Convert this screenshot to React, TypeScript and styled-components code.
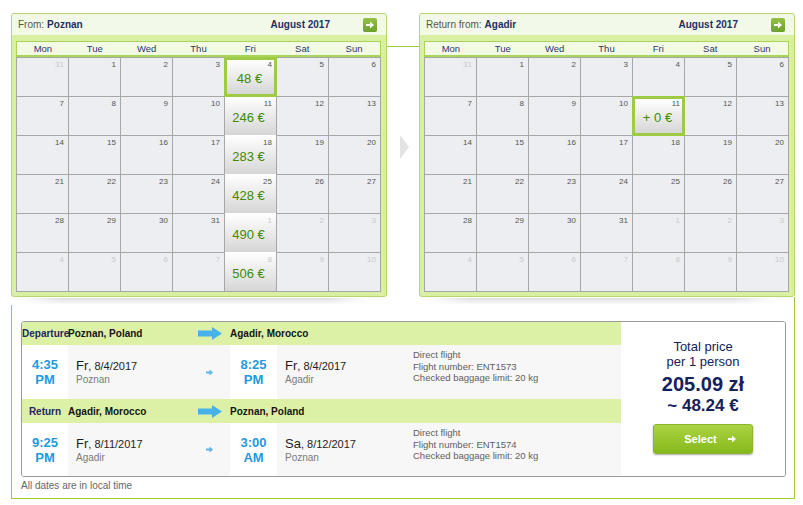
import React from 'react';
import styled, { createGlobalStyle, css } from 'styled-components';

const GlobalStyle = createGlobalStyle`
  html, body { margin: 0; padding: 0; background: #fff; }
  body { font-family: "Liberation Sans", Arial, sans-serif; }
`;

const Page = styled.div`
  width: 784px;
  padding: 13px 0 0 11px;
`;

/* ---------- calendars ---------- */

const CalendarRow = styled.div`
  display: flex;
`;

const CalendarColumn = styled.div`
  width: 376px;
  display: flex;
  flex-direction: column;
`;

const ShadowSlot = styled.div<{ $edge?: boolean }>`
  box-sizing: border-box;
  height: 8px;
  padding: 1px 20px 0 9px;
  ${(p) => p.$edge && css`border-right: 1px solid #9ccc3c;`}
`;

const Shadow = styled.div`
  height: 7px;
  background: linear-gradient(to bottom, rgba(0, 0, 0, 0.13), rgba(0, 0, 0, 0));
  -webkit-mask-image: linear-gradient(to right, transparent, #000 12%, #000 88%, transparent);
  mask-image: linear-gradient(to right, transparent, #000 12%, #000 88%, transparent);
`;

const Bridge = styled.div`
  width: 32px;
  display: flex;
  flex-direction: column;
`;

const BridgeLine = styled.div`
  height: 1px;
  margin-top: 33px;
  background: #9ccc3c;
`;

const BridgeTriangle = styled.div`
  width: 0;
  height: 0;
  margin: 88px 0 0 13px;
  border-left: 9px solid #e3e3e3;
  border-top: 12px solid transparent;
  border-bottom: 12px solid transparent;
`;

const Panel = styled.section`
  box-sizing: border-box;
  width: 376px;
  height: 284px;
  border: 1px solid #b3d76c;
  border-radius: 3px;
  background: #d9efa1;
  display: flex;
  flex-direction: column;
  overflow: hidden;
`;

const PanelHeader = styled.header`
  height: 21px;
  flex: none;
  background: #f3f9e8;
  display: flex;
  align-items: center;
  padding: 0 9px 0 6px;
  font-size: 10px;
  color: #555;
`;

const Place = styled.b`
  color: #262d60;
  margin-left: 3px;
`;

const Month = styled.b`
  margin-left: auto;
  margin-right: 33px;
  color: #262d60;
`;

const NextButton = styled.button`
  width: 14px;
  height: 14px;
  padding: 0;
  border: none;
  border-radius: 2px;
  background: linear-gradient(#93c343, #6c9f2b);
  display: flex;
  align-items: center;
  justify-content: center;
`;

const PanelBody = styled.div`
  padding: 6px 5px 4px 4px;
`;

const DayNames = styled.div`
  display: grid;
  grid-template-columns: repeat(7, 1fr);
  height: 13px;
  border: 1px solid #a9d45b;
  border-bottom-width: 2px;
  background: #f3fbe5;
  font-size: 9.5px;
  line-height: 13px;
  color: #30336b;
  text-align: center;
`;

const DayGrid = styled.div`
  display: grid;
  grid-template-columns: repeat(7, 51px);
  grid-auto-rows: 38px;
  gap: 1px;
  padding: 1px;
  background: #a7a7a7;
`;

const Cell = styled.div<{ $out?: boolean; $priced?: boolean; $selected?: boolean }>`
  background: #eceef1;
  padding: 2px 4px 0 0;
  text-align: right;
  font-size: 8px;
  line-height: 10px;
  color: ${(p) => (p.$out ? '#c9c9c9' : '#555')};
  ${(p) =>
    p.$priced &&
    css`
      background: linear-gradient(#ffffff, #d6d6d6);
      margin-top: -1px;
      padding-top: 3px;
    `}
  ${(p) =>
    p.$selected &&
    css`
      position: relative;
      z-index: 1;
      margin: -1px;
      border: 3px solid #9dcb45;
      padding: 0 2px 0 0;
    `}
`;

const Price = styled.div`
  margin-top: 1px;
  text-align: center;
  font-size: 13px;
  line-height: 15px;
  color: #3f8a00;
`;

/* ---------- summary ---------- */

const Summary = styled.section`
  box-sizing: border-box;
  width: 784px;
  border: 1px solid #9ccc3c;
  border-top: none;
  padding: 16px 8px 6px 9px;
`;

const ResultBox = styled.div`
  box-sizing: border-box;
  height: 156px;
  display: flex;
  border: 1px solid #9a9a9a;
  border-radius: 3px;
  overflow: hidden;
`;

const Flights = styled.div`
  width: 599px;
  display: flex;
  flex-direction: column;
`;

const SegmentRow = styled.div<{ $h: number; $head?: boolean }>`
  display: grid;
  grid-template-columns: 46px 162px 47px 1fr;
  height: ${(p) => p.$h}px;
  ${(p) =>
    p.$head &&
    css`
      background: #dcf1a6;
      align-items: center;
      font-size: 10px;
      font-weight: bold;
      color: #141414;
    `}
`;

const SegmentLabel = styled.div`
  text-align: center;
  white-space: nowrap;
  color: #22285e;
`;

const FromCity = styled.div`
  display: flex;
  align-items: center;
  justify-content: space-between;
  padding-right: 8px;
`;

const ToCity = styled.div`
  grid-column: 3 / 5;
`;

const TimeCell = styled.div`
  background: #fff;
  display: flex;
  flex-direction: column;
  justify-content: center;
  text-align: center;
  font-size: 13px;
  line-height: 15px;
  font-weight: bold;
  color: #2399df;
`;

const DateCell = styled.div`
  background: #f7f7f7;
  display: flex;
  align-items: center;
  padding-left: 8px;
`;

const DateBlock = styled.div<{ $w?: number }>`
  ${(p) => p.$w && css`width: ${p.$w}px; flex: none;`}
`;

const DateLine = styled.div`
  font-size: 11px;
  line-height: 15px;
  color: #1d1d1d;
`;

const WeekDay = styled.span`
  font-size: 13px;
`;

const CityLine = styled.div`
  font-size: 10px;
  line-height: 12px;
  color: #7a7a7a;
`;

const SmallArrow = styled.svg`
  margin: 0 17px 0 auto;
`;

const Info = styled.div`
  align-self: flex-start;
  padding-top: 4px;
  font-size: 9.5px;
  line-height: 11.5px;
  color: #606060;
`;

const PricePanel = styled.div`
  flex: 1;
  background: #fff;
  display: flex;
  flex-direction: column;
  align-items: center;
  padding-top: 17px;
  color: #15215b;
`;

const PriceTitle = styled.div`
  font-size: 13px;
  line-height: 15px;
  text-align: center;
`;

const Amount = styled.div<{ $size: number; $lh: number; $top?: number }>`
  font-weight: bold;
  font-size: ${(p) => p.$size}px;
  line-height: ${(p) => p.$lh}px;
  margin-top: ${(p) => p.$top ?? 0}px;
`;

const SelectButton = styled.button`
  box-sizing: border-box;
  width: 100px;
  height: 30px;
  margin-top: 8px;
  padding: 0 0 0 14px;
  border: 1px solid #8ab52c;
  border-radius: 3px;
  background: linear-gradient(#abd342, #86b91c);
  box-shadow: 0 1px 2px rgba(0, 0, 0, 0.35);
  color: #fff;
  font-family: inherit;
  font-size: 11px;
  font-weight: bold;
  display: flex;
  align-items: center;
  justify-content: center;
  gap: 11px;
`;

const Note = styled.div`
  margin-top: 3px;
  font-size: 10px;
  line-height: 12px;
  color: #666;
`;

/* ---------- icons ---------- */

const ArrowIcon = ({ w, h, color }: { w: number; h: number; color: string }) => (
  <svg width={w} height={h} viewBox="0 0 10 10">
    <path d="M0 3.6H5V0.6L10 5L5 9.4V6.4H0Z" fill={color} />
  </svg>
);

const BigArrow = () => (
  <svg width="24" height="13" viewBox="0 0 24 13">
    <path d="M0 3.5H14V0L24 6.5L14 13V9.5H0Z" fill="#47b1ea" />
  </svg>
);

/* ---------- data ---------- */

type Day = { n: number; out: boolean };

const buildMonth = (): Day[] => {
  const days: Day[] = [{ n: 31, out: true }];
  for (let d = 1; d <= 31; d++) days.push({ n: d, out: false });
  for (let d = 1; d <= 10; d++) days.push({ n: d, out: true });
  return days;
};

const MONTH = buildMonth();
const WEEK = ['Mon', 'Tue', 'Wed', 'Thu', 'Fri', 'Sat', 'Sun'];

type Fare = { label: string; selected?: boolean };

const Calendar = ({
  prefix,
  city,
  fares,
}: {
  prefix: string;
  city: string;
  fares: Record<number, Fare>;
}) => (
  <Panel>
    <PanelHeader>
      {prefix}
      <Place>{city}</Place>
      <Month>August 2017</Month>
      <NextButton aria-label="Next month">
        <ArrowIcon w={8} h={8} color="#fff" />
      </NextButton>
    </PanelHeader>
    <PanelBody>
      <DayNames>
        {WEEK.map((w) => (
          <span key={w}>{w}</span>
        ))}
      </DayNames>
      <DayGrid>
        {MONTH.map((d, i) => {
          const fare = fares[i];
          return (
            <Cell key={i} $out={d.out} $priced={!!fare} $selected={fare?.selected}>
              {d.n}
              {fare && <Price>{fare.label}</Price>}
            </Cell>
          );
        })}
      </DayGrid>
    </PanelBody>
  </Panel>
);

const outbound: Record<number, Fare> = {
  4: { label: '48 €', selected: true },
  11: { label: '246 €' },
  18: { label: '283 €' },
  25: { label: '428 €' },
  32: { label: '490 €' },
  39: { label: '506 €' },
};

const inbound: Record<number, Fare> = {
  11: { label: '+ 0 €', selected: true },
};

type Leg = {
  label: string;
  from: string;
  to: string;
  dep: [string, string];
  arr: [string, string];
  depDate: [string, string];
  arrDate: [string, string];
  depCity: string;
  arrCity: string;
  flight: string;
};

const legs: Leg[] = [
  {
    label: 'Departure',
    from: 'Poznan, Poland',
    to: 'Agadir, Morocco',
    dep: ['4:35', 'PM'],
    arr: ['8:25', 'PM'],
    depDate: ['Fr', '8/4/2017'],
    arrDate: ['Fr', '8/4/2017'],
    depCity: 'Poznan',
    arrCity: 'Agadir',
    flight: 'ENT1573',
  },
  {
    label: 'Return',
    from: 'Agadir, Morocco',
    to: 'Poznan, Poland',
    dep: ['9:25', 'PM'],
    arr: ['3:00', 'AM'],
    depDate: ['Fr', '8/11/2017'],
    arrDate: ['Sa', '8/12/2017'],
    depCity: 'Agadir',
    arrCity: 'Poznan',
    flight: 'ENT1574',
  },
];

const DateText = ({ date, city }: { date: [string, string]; city: string }) => (
  <>
    <DateLine>
      <WeekDay>{date[0]}</WeekDay>, {date[1]}
    </DateLine>
    <CityLine>{city}</CityLine>
  </>
);

export default function App() {
  return (
    <>
      <GlobalStyle />
      <Page>
        <CalendarRow>
          <CalendarColumn>
            <Calendar prefix="From:" city="Poznan" fares={outbound} />
            <ShadowSlot>
              <Shadow />
            </ShadowSlot>
          </CalendarColumn>
          <Bridge>
            <BridgeLine />
            <BridgeTriangle />
          </Bridge>
          <CalendarColumn>
            <Calendar prefix="Return from:" city="Agadir" fares={inbound} />
            <ShadowSlot $edge>
              <Shadow />
            </ShadowSlot>
          </CalendarColumn>
        </CalendarRow>

        <Summary>
          <ResultBox>
            <Flights>
              {legs.map((leg, i) => (
                <React.Fragment key={leg.label}>
                  <SegmentRow $h={i === 0 ? 23 : 24} $head>
                    <SegmentLabel>{leg.label}</SegmentLabel>
                    <FromCity>
                      {leg.from}
                      <BigArrow />
                    </FromCity>
                    <ToCity>{leg.to}</ToCity>
                  </SegmentRow>
                  <SegmentRow $h={i === 0 ? 54 : 53}>
                    <TimeCell>
                      <span>{leg.dep[0]}</span>
                      <span>{leg.dep[1]}</span>
                    </TimeCell>
                    <DateCell>
                      <DateBlock>
                        <DateText date={leg.depDate} city={leg.depCity} />
                      </DateBlock>
                      <SmallArrow width="7" height="7" viewBox="0 0 10 10">
                        <path d="M0 3.6H5V0.6L10 5L5 9.4V6.4H0Z" fill="#5ab5ea" />
                      </SmallArrow>
                    </DateCell>
                    <TimeCell>
                      <span>{leg.arr[0]}</span>
                      <span>{leg.arr[1]}</span>
                    </TimeCell>
                    <DateCell>
                      <DateBlock $w={128}>
                        <DateText date={leg.arrDate} city={leg.arrCity} />
                      </DateBlock>
                      <Info>
                        Direct flight
                        <br />
                        Flight number: {leg.flight}
                        <br />
                        Checked baggage limit: 20 kg
                      </Info>
                    </DateCell>
                  </SegmentRow>
                </React.Fragment>
              ))}
            </Flights>
            <PricePanel>
              <PriceTitle>
                Total price
                <br />
                per 1 person
              </PriceTitle>
              <Amount $size={20} $lh={24} $top={3}>
                205.09 zł
              </Amount>
              <Amount $size={17} $lh={20}>
                ~ 48.24 €
              </Amount>
              <SelectButton>
                Select
                <ArrowIcon w={8} h={8} color="#fff" />
              </SelectButton>
            </PricePanel>
          </ResultBox>
          <Note>All dates are in local time</Note>
        </Summary>
      </Page>
    </>
  );
}
